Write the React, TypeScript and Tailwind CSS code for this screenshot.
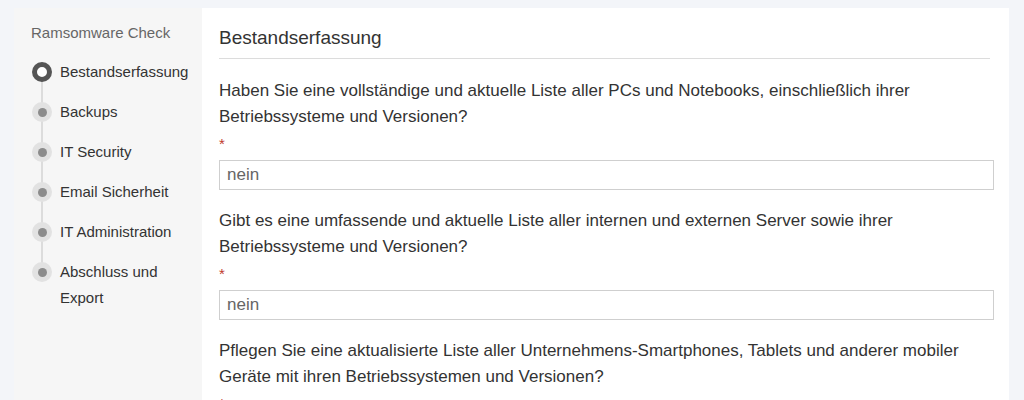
import React from 'react';

const STEPS = [
  { label: 'Bestandserfassung', active: true },
  { label: 'Backups' },
  { label: 'IT Security' },
  { label: 'Email Sicherheit' },
  { label: 'IT Administration' },
  { label: 'Abschluss und Export' },
];

const QUESTIONS = [
  'Haben Sie eine vollständige und aktuelle Liste aller PCs und Notebooks, einschließlich ihrer Betriebssysteme und Versionen?',
  'Gibt es eine umfassende und aktuelle Liste aller internen und externen Server sowie ihrer Betriebssysteme und Versionen?',
  'Pflegen Sie eine aktualisierte Liste aller Unternehmens-Smartphones, Tablets und anderer mobiler Geräte mit ihren Betriebssystemen und Versionen?',
];

// ── Sidebar step dot ───────────────────────────────────────────────
function StepDot({ active }: { active?: boolean }) {
  if (active) {
    return <div className="w-5 h-5 rounded-full border-[5px] border-[#555] bg-white flex-shrink-0" />;
  }
  return (
    <div className="w-5 h-5 rounded-full bg-[#e2e2e2] flex items-center justify-center flex-shrink-0">
      <div className="w-[9px] h-[9px] rounded-full bg-[#8c8c8c]" />
    </div>
  );
}

function Sidebar() {
  return (
    <aside className="w-[188px] ml-[14px] bg-[#f6f6f6] pl-[17px] pr-1 pt-[15px] flex-shrink-0">
      <div className="text-[15px] leading-5 text-[#666]">Ramsomware Check</div>
      <div className="relative mt-4">
        <div className="absolute left-[10px] top-[13px] bottom-[39px] w-[2px] bg-[#dcdcdc]" />
        {STEPS.map(step => (
          <div key={step.label} className="relative flex items-start gap-2 min-h-[40px]">
            <div className="h-[26px] flex items-center ml-[1px]">
              <StepDot active={step.active} />
            </div>
            <span className="text-[15px] leading-[26px] text-[#333] w-[118px]">{step.label}</span>
          </div>
        ))}
      </div>
    </aside>
  );
}

export default function App() {
  return (
    <div
      className="w-full min-h-[400px] bg-[#f3f5f9] pt-2 flex"
      style={{ fontFamily: '"Liberation Sans", Arial, sans-serif' }}
    >
      <Sidebar />
      <main className="flex-1 bg-white mr-[15px] px-[17px] pt-[18px] overflow-hidden h-[392px]">
        <h1 className="text-[19px] leading-6 text-[#333] pb-2 border-b border-[#dcdcdc] mr-[2px]">Bestandserfassung</h1>
        <div className="pt-[19px]">
          {QUESTIONS.map((q, i) => (
            <div key={i} className="mb-[18px]">
              <p className="text-[17px] leading-[26px] text-[#333]">{q}</p>
              <div className="text-[15px] leading-[28px] h-[30px] text-[#c0392b]">*</div>
              <div className="h-[30px] border border-[#cfcfcf] px-[7px] flex items-center text-[17px] text-[#666] w-[calc(100%+2px)]">
                nein
              </div>
            </div>
          ))}
        </div>
      </main>
    </div>
  );
}
